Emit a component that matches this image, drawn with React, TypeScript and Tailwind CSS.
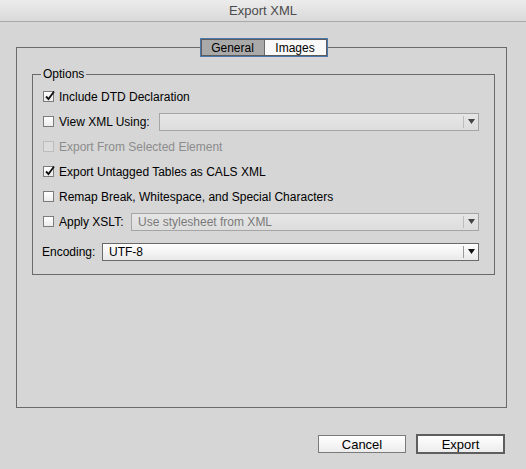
const font = { fontFamily: '"Liberation Sans", Arial, sans-serif' };

const Check = ({ checked, disabled }: { checked?: boolean; disabled?: boolean }) => (
  <span
    className={
      'relative flex h-[11px] w-[11px] shrink-0 items-center justify-center border ' +
      (disabled
        ? 'border-[#bdbdbd] bg-[#dcdcdc]'
        : 'border-[#7c7c7c] bg-gradient-to-b from-white to-[#ececec]')
    }
  >
    {checked && (
      <svg width="11" height="11" viewBox="0 0 11 11" className="absolute -top-[2px] left-[0px]">
        <path d="M2 6.5 L4.5 9 L10 1.5" fill="none" stroke="#111" strokeWidth="1.8" />
      </svg>
    )}
  </span>
);

const Select = ({
  value,
  width,
  enabled,
}: {
  value?: string;
  width: string;
  enabled?: boolean;
}) => (
  <div
    className={
      'ml-auto flex h-[18px] items-center border ' +
      width +
      ' ' +
      (enabled
        ? 'border-[#6a6a6a] bg-gradient-to-b from-white to-[#e9e9e9] text-black'
        : 'border-[#a5a5a5] bg-gradient-to-b from-[#e6e6e6] to-[#dddddd] text-[#7a7a7a]')
    }
  >
    <span className="flex-1 truncate pl-[6px] text-[12px]">{value}</span>
    <span className={'h-[12px] w-px ' + (enabled ? 'bg-[#9a9a9a]' : 'bg-[#bdbdbd]')} />
    <span className="flex w-[14px] justify-center">
      <svg width="7" height="5" viewBox="0 0 7 5">
        <path d="M0 0 H7 L3.5 5 Z" fill={enabled ? '#111' : '#444'} />
      </svg>
    </span>
  </div>
);

const Row = ({
  children,
  className = '',
}: {
  children: React.ReactNode;
  className?: string;
}) => <div className={'flex h-[25px] items-center ' + className}>{children}</div>;

export default function App() {
  return (
    <div className="h-[469px] w-[526px] overflow-hidden bg-[#d6d6d6] text-[12px] text-black" style={font}>
      <div className="flex h-[22px] items-center justify-center border-b border-[#a9a9a9] bg-gradient-to-b from-[#ececec] to-[#d9d9d9] text-[13px] text-[#4b4b4b]">
        Export XML
      </div>

      <div className="relative z-10 mt-[16px] flex justify-center pl-[1px]">
        <div className="flex h-[19px] border border-[#4c78ab]">
          <div className="flex border border-[#5c5c5c]">
            <div className="flex w-[62px] items-center justify-center bg-[#a9a9a9] text-[12px]">General</div>
            <div className="flex w-[62px] items-center justify-center border-l border-[#6a6a6a] bg-[#f9f9f9] text-[12px]">
              Images
            </div>
          </div>
        </div>
      </div>

      <div className="-mt-[10px] ml-[16px] flex h-[361px] w-[491px] flex-col border border-[#6a6a6a] pt-[26px]">
        <div className="ml-[15px] flex w-[463px] flex-col border border-[#6a6a6a] pb-[10px] pl-[10px] pr-[15px]">
          <span className="-mt-[8px] -ml-[2px] h-[14px] self-start bg-[#d6d6d6] px-[2px] leading-[14px]">Options</span>

          <Row className="mt-[3px]">
            <Check checked />
            <span className="ml-[5px]">Include DTD Declaration</span>
          </Row>
          <Row>
            <Check />
            <span className="ml-[5px]">View XML Using:</span>
            <Select width="w-[320px]" />
          </Row>
          <Row>
            <Check disabled />
            <span className="ml-[5px] text-[#8c8c8c]">Export From Selected Element</span>
          </Row>
          <Row>
            <Check checked />
            <span className="ml-[5px]">Export Untagged Tables as CALS XML</span>
          </Row>
          <Row>
            <Check />
            <span className="ml-[5px]">Remap Break, Whitespace, and Special Characters</span>
          </Row>
          <Row>
            <Check />
            <span className="ml-[5px]">Apply XSLT:</span>
            <Select width="w-[348px]" value="Use stylesheet from XML" />
          </Row>
          <Row className="mt-[5px]">
            <span className="-ml-[1px]">Encoding:</span>
            <Select width="w-[377px]" value="UTF-8" enabled />
          </Row>
        </div>
      </div>

      <div className="mt-[26px] flex justify-end gap-[10px] pr-[21px]">
        <button className="mt-[1px] h-[18px] w-[88px] border border-[#7a7a7a] bg-gradient-to-b from-white to-[#ececec] text-[13px] leading-none">
          Cancel
        </button>
        <button className="h-[20px] w-[89px] border-2 border-[#5e5e5e] bg-gradient-to-b from-white to-[#ececec] text-[13px] leading-none">
          Export
        </button>
      </div>
    </div>
  );
}
